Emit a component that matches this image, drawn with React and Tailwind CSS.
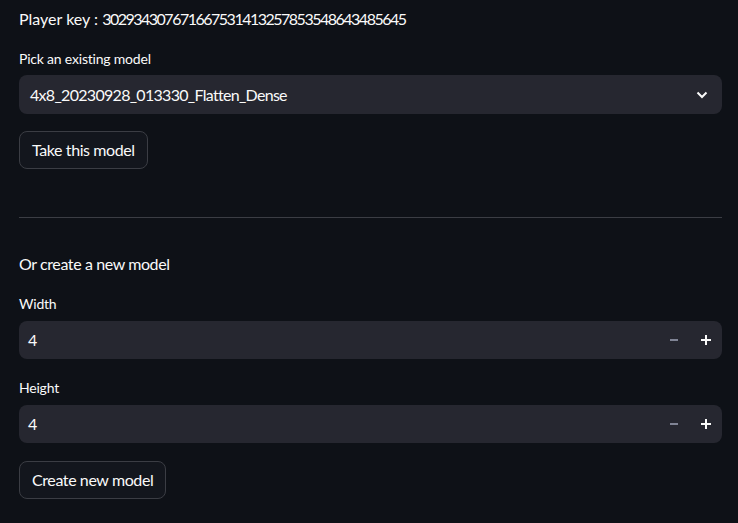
import React from 'react';

function Label({ children }) {
  return <div className="text-[14px] leading-[20px] tracking-[-0.2px] text-[#fafafa] mb-[7px]">{children}</div>;
}

function NumberInput({ value }) {
  return (
    <div className="flex items-center h-[38px] rounded-[8px] bg-[#262730]">
      <div className="flex-1 pl-[9px] text-[16px] text-[#fafafa]">{value}</div>
      <div className="flex items-center justify-center w-[32px] h-full">
        <div className="w-[8px] h-[2px] bg-[#808495]" />
      </div>
      <div className="flex items-center justify-center w-[32px] h-full">
        <svg width="10" height="10" viewBox="0 0 10 10">
          <rect x="4" y="0" width="2" height="10" fill="#fafafa" />
          <rect x="0" y="4" width="10" height="2" fill="#fafafa" />
        </svg>
      </div>
    </div>
  );
}

function Button({ children }) {
  return (
    <button className="h-[38px] px-[12px] rounded-[8px] border border-[#3b3d44] bg-[#13161d] text-[16px] tracking-[-0.4px] text-[#fafafa]">
      {children}
    </button>
  );
}

export default function App() {
  return (
    <div
      className="min-h-[523px] w-full bg-[#0e1117] text-[#fafafa] pl-[19px] pr-[16px]"
      style={{ fontFamily: 'Lato, sans-serif' }}
    >
      <div className="pt-[7px] text-[16px] leading-[24px]">
        Player key : <span className="tracking-[-1.5px]">302934307671667531413257853548643485645</span>
      </div>

      <div className="mt-[18px]">
        <div className="text-[14px] leading-[20px] tracking-[-0.2px] mb-[6px]">Pick an existing model</div>
        <div className="flex items-center h-[39px] rounded-[8px] bg-[#262730] pl-[11px] pr-[14px]">
          <div className="flex-1 text-[16px] tracking-[-0.7px]">4x8_20230928_013330_Flatten_Dense</div>
          <svg width="12" height="8" viewBox="0 0 12 8">
            <path d="M1.5 1.5 L6 6 L10.5 1.5" stroke="#fafafa" strokeWidth="2" fill="none" />
          </svg>
        </div>
      </div>

      <div className="mt-[17px]">
        <Button>Take this model</Button>
      </div>

      <div className="mt-[48px] h-px bg-[#3b3d44]" />

      <div className="mt-[34px] text-[16px] leading-[24px] tracking-[-0.4px]">Or create a new model</div>

      <div className="mt-[18px]">
        <Label>Width</Label>
        <NumberInput value="4" />
      </div>

      <div className="mt-[19px]">
        <Label>Height</Label>
        <NumberInput value="4" />
      </div>

      <div className="mt-[18px]">
        <Button>Create new model</Button>
      </div>
    </div>
  );
}
